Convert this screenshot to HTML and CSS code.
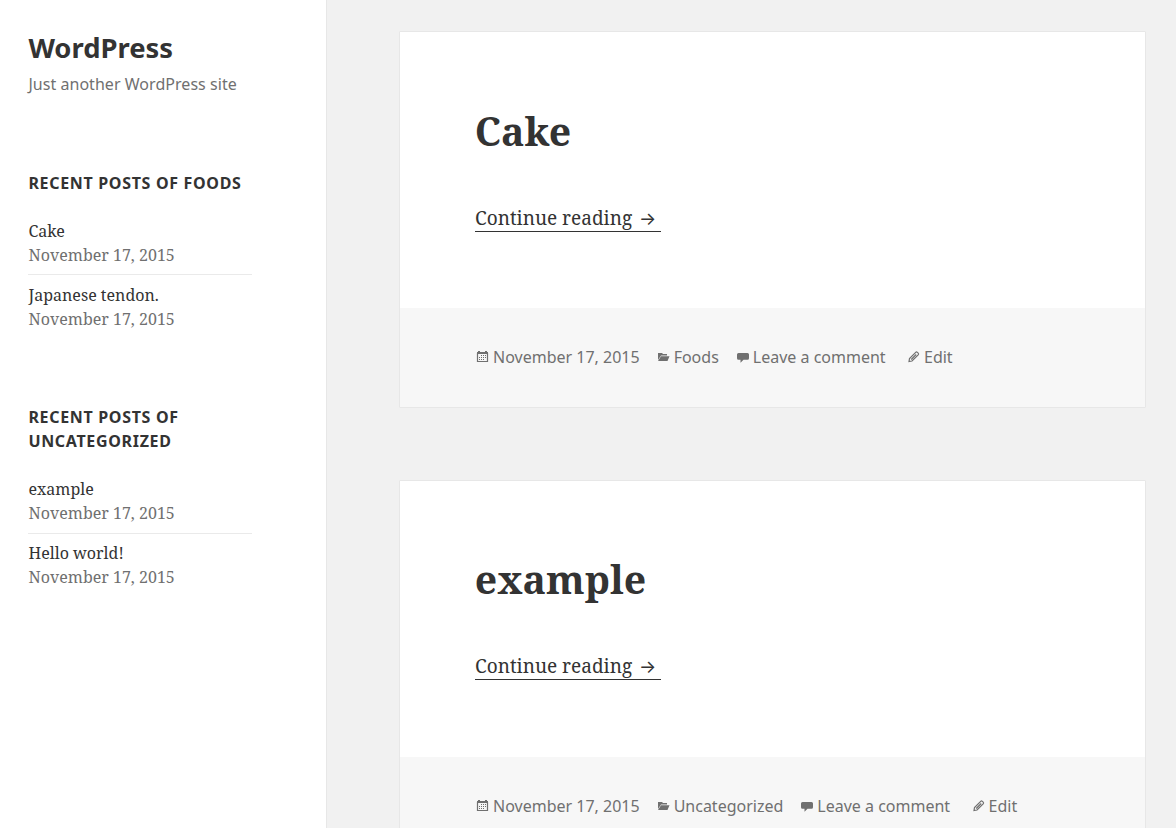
FILE: index.html
```html
<!DOCTYPE html>
<html lang="en">
<head>
<meta charset="utf-8">
<title>WordPress</title>
<link rel="stylesheet" href="styles.css">
</head>
<body>
<svg class="defs" width="0" height="0">
<symbol id="cal" viewBox="0 0 16 16"><path fill="none" stroke="currentColor" stroke-width="1.200" d="M2.500 4v8.500h10V4"/><path fill="currentColor" d="M2 3h1V2h2v1h5V2h2v1h1v2H2z"/><path fill="currentColor" d="M6 6h1v1H6zM8 6h1v1H8zM10 6h1v1h-1zM4 8h1v1H4zM6 8h1v1H6zM8 8h1v1H8zM10 8h1v1h-1zM4 10h1v1H4zM6 10h1v1H6zM8 10h1v1H8z"/></symbol>
<symbol id="folder" viewBox="0 0 16 16"><path fill="currentColor" d="M2 4h4l1 1h4v1.500H5L2 11zM5 7.300h8.500L11.500 12H2z"/></symbol>
<symbol id="comment" viewBox="0 0 16 16"><path fill="currentColor" d="M3.500 4h9A1.500 1.500 0 0 1 14 5.500v3.700a1.500 1.500 0 0 1-1.500 1.500H8.500l-3 3v-3h-2A1.500 1.500 0 0 1 2 9.200V5.500A1.500 1.500 0 0 1 3.500 4z"/></symbol>
<symbol id="pencil" viewBox="0 0 16 16"><path fill="none" stroke="currentColor" stroke-width="1.200" d="M3 12.500l.5-3L9.700 3.300q.8-.8 1.600 0l.9.9q.8.800 0 1.600L6 12zM5.200 10.500l5-5"/></symbol>
</svg>
<div class="page">
<aside class="sidebar">
<h1 class="site-title">WordPress</h1>
<p class="tagline">Just another WordPress site</p>
<section class="widget">
<h2>Recent Posts of Foods</h2>
<ul><li><a>Cake</a><span>November 17, 2015</span></li><li><a>Japanese tendon.</a><span>November 17, 2015</span></li></ul>
</section>
<section class="widget">
<h2>Recent Posts of Uncategorized</h2>
<ul><li><a>example</a><span>November 17, 2015</span></li><li><a>Hello world!</a><span>November 17, 2015</span></li></ul>
</section>
</aside>
<main class="content">
<article class="post">
<h2 class="post-title">Cake</h2>
<p class="more"><a>Continue reading <span class="arrow">→</span></a></p>
<footer class="meta"><span><svg><use href="#cal"/></svg>November 17, 2015</span><span><svg><use href="#folder"/></svg>Foods</span><span><svg><use href="#comment"/></svg>Leave a comment</span><span class="edit"><svg><use href="#pencil"/></svg>Edit</span></footer>
</article>
<article class="post">
<h2 class="post-title">example</h2>
<p class="more"><a>Continue reading <span class="arrow">→</span></a></p>
<footer class="meta"><span><svg><use href="#cal"/></svg>November 17, 2015</span><span><svg><use href="#folder"/></svg>Uncategorized</span><span><svg><use href="#comment"/></svg>Leave a comment</span><span class="edit"><svg><use href="#pencil"/></svg>Edit</span></footer>
</article>
</main>
</div>
</body>
</html>
```
FILE: styles.css
```css
* { box-sizing: border-box; margin: 0; padding: 0; }
body { background: #f1f1f1; color: #333; font: 16px/24px "Noto Sans", sans-serif; }
.defs { display: block; }
.page { display: flex; height: 828px; overflow: hidden; }
.sidebar { width: 327px; flex: none; background: #fff; border-right: 1px solid #e7e7e7; padding: 30px 74px 0 28px; }
.site-title { font-size: 27.4px; line-height: 36px; font-weight: 700; padding-left: .4px; }
.tagline { color: #707070; margin-top: 6px; letter-spacing: .04px; padding-left: .4px; }
.widget { margin-top: 75px; }
.widget + .widget { margin-top: 74px; }
.widget h2 { font-size: 16px; line-height: 24px; letter-spacing: .68px; text-transform: uppercase; margin-bottom: 24px; padding-left: .4px; }
.widget ul { list-style: none; font-family: "Noto Serif", "DejaVu Serif", serif; }
.widget li a, .widget li span { display: block; padding-left: .5px; }
.widget li span { color: #707070; }
.widget li + li { border-top: 1px solid #eaeaea; margin-top: 7px; padding-top: 8px; }
.widget + .widget li + li { margin-top: 8px; padding-top: 7px; }
.content { flex: 1; padding: 31px 30px 0 72px; }
.post { background: #fff; border: 1px solid #e7e7e7; border-radius: 1px; height: 377px; margin-bottom: 72px; display: flex; flex-direction: column; }
.post-title { font: 700 39.2px/47px "Noto Serif", serif; padding: 75px 75px 0 74.800px; }
.more { height: 80px; font: 19px/32px "Noto Serif", serif; padding: 48px 75px 0; }
.post + .post .post-title { padding-top: 74px; }
.more a { display: inline-block; width: 186px; height: 30px; border-bottom: 1px solid #333; white-space: nowrap; }
.arrow { font-family: Inter, "DejaVu Sans", sans-serif; font-size: 18px; line-height: 1; padding-left: 2px; }
.meta { margin-top: auto; height: 99px; background: #f7f7f7; color: #707070; display: flex; padding: 36px 75px 38px; white-space: nowrap; }
.meta > span { display: flex; align-items: center; margin-right: 16px; }
.meta > span.edit { margin-left: 4.400px; }
.meta svg { width: 16px; height: 16px; margin-right: 2px; }
```
